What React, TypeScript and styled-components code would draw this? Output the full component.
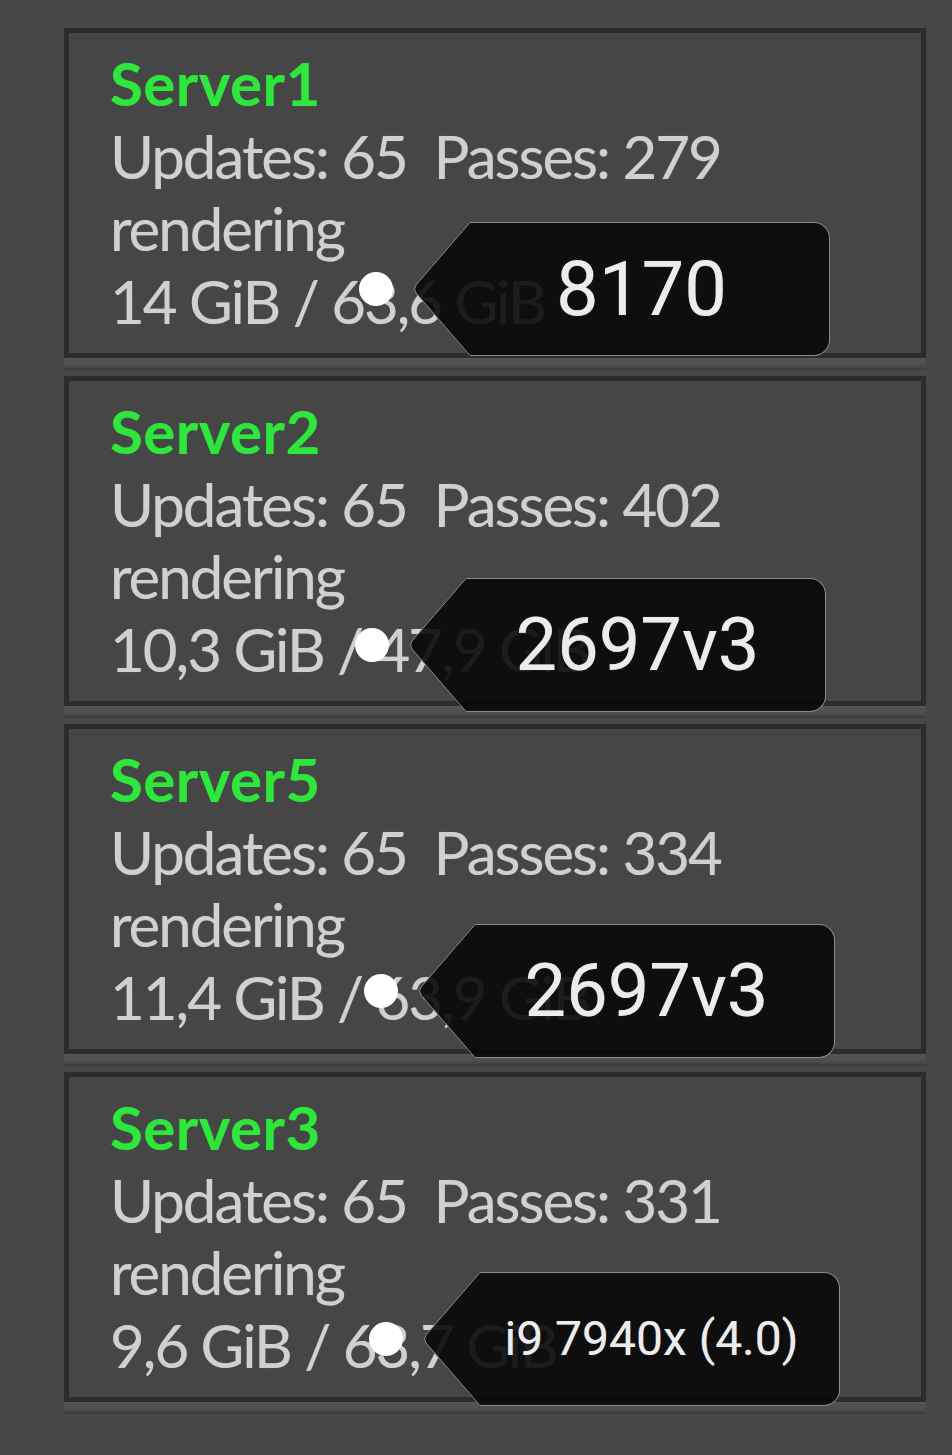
import React from 'react'
import styled, { createGlobalStyle } from 'styled-components'

const GlobalStyle = createGlobalStyle`
    html, body {
        margin: 0;
        padding: 0;
        background: #474747;
    }
`

const Page = styled.div`
    width: 952px;
    min-height: 1455px;
    box-sizing: border-box;
    padding: 28px 26px 0 64px;
    background: #474747;
    display: flex;
    flex-direction: column;
`

const Slot = styled.div`
    display: flex;
    flex-direction: column;
    margin-bottom: 6px;
`

const Card = styled.div`
    position: relative;
    height: 330px;
    box-sizing: border-box;
    border: 5px solid #2c2c2c;
    background: #464646;
    padding: 14px 0 0 41px;
    font-family: Lato, "Noto Sans", sans-serif;
    font-size: 60px;
    line-height: 72.5px;
    color: #d0d0d0;
    text-shadow: 0 0 1px rgba(200, 200, 220, 0.5);
`

const Lip = styled.div`
    height: 12px;
    background: linear-gradient(#555555, #4d4d4d 60%, #3a3a3a);
`

const Name = styled.div`
    font-weight: 700;
    letter-spacing: 0.5px;
    color: #2ee63c;
    text-shadow: 0 0 1px rgba(46, 230, 60, 0.5);
`

const Line = styled.div`
    white-space: pre;
    letter-spacing: -2px;
`

const Marker = styled.div<{ $left: number; $top: number }>`
    position: absolute;
    left: ${p => p.$left}px;
    top: ${p => p.$top}px;
    display: flex;
    align-items: center;
`

const Dot = styled.div`
    width: 34px;
    height: 34px;
    border-radius: 50%;
    background: #ffffff;
    margin-right: 19px;
`

const Arrow = styled.svg`
    display: block;
    width: 58px;
    height: 134px;
`

const Body = styled.div<{ $size: number }>`
    width: 360px;
    height: 134px;
    box-sizing: border-box;
    background: rgba(8, 8, 8, 0.9);
    border: 1px solid #8c8c8c;
    border-left: none;
    border-radius: 0 16px 16px 0;
    display: flex;
    align-items: center;
    justify-content: center;
    padding-right: 16px;
    font-family: Roboto, "Noto Sans", sans-serif;
    font-size: ${p => p.$size}px;
    color: #ececec;
    white-space: pre;
`

function Tag({ label, left, top, size }: { label: string; left: number; top: number; size: number }) {
    return (
        <Marker $left={left} $top={top}>
            <Dot />
            <Arrow viewBox="0 0 58 134">
                <path d="M58 0 L4 63 Q1 67 4 71 L58 134 Z" fill="rgba(8,8,8,0.9)" />
                <path d="M58 0.5 L4 63 Q1 67 4 71 L58 133.5" fill="none" stroke="#8c8c8c" strokeWidth="1" />
            </Arrow>
            <Body $size={size}>{label}</Body>
        </Marker>
    )
}

const servers = [
    { name: 'Server1', passes: 279, mem: '14 GiB / 63,6 GiB', tag: '8170', left: 290, top: 189, size: 76 },
    { name: 'Server2', passes: 402, mem: '10,3 GiB / 47,9 GiB', tag: '2697v3', left: 286, top: 197, size: 74 },
    { name: 'Server5', passes: 334, mem: '11,4 GiB / 63,9 GiB', tag: '2697v3', left: 295, top: 195, size: 74 },
    { name: 'Server3', passes: 331, mem: '9,6 GiB / 63,7 GiB', tag: 'i9 7940x (4.0)', left: 300, top: 195, size: 48 },
]

export default function App() {
    return (
        <Page>
            <GlobalStyle />
            {servers.map(s => (
                <Slot key={s.name}>
                    <Card>
                        <Name>{s.name}</Name>
                        <Line>{`Updates: 65  Passes: ${s.passes}`}</Line>
                        <Line>rendering</Line>
                        <Line>{s.mem}</Line>
                        <Tag label={s.tag} left={s.left} top={s.top} size={s.size} />
                    </Card>
                    <Lip />
                </Slot>
            ))}
        </Page>
    )
}
